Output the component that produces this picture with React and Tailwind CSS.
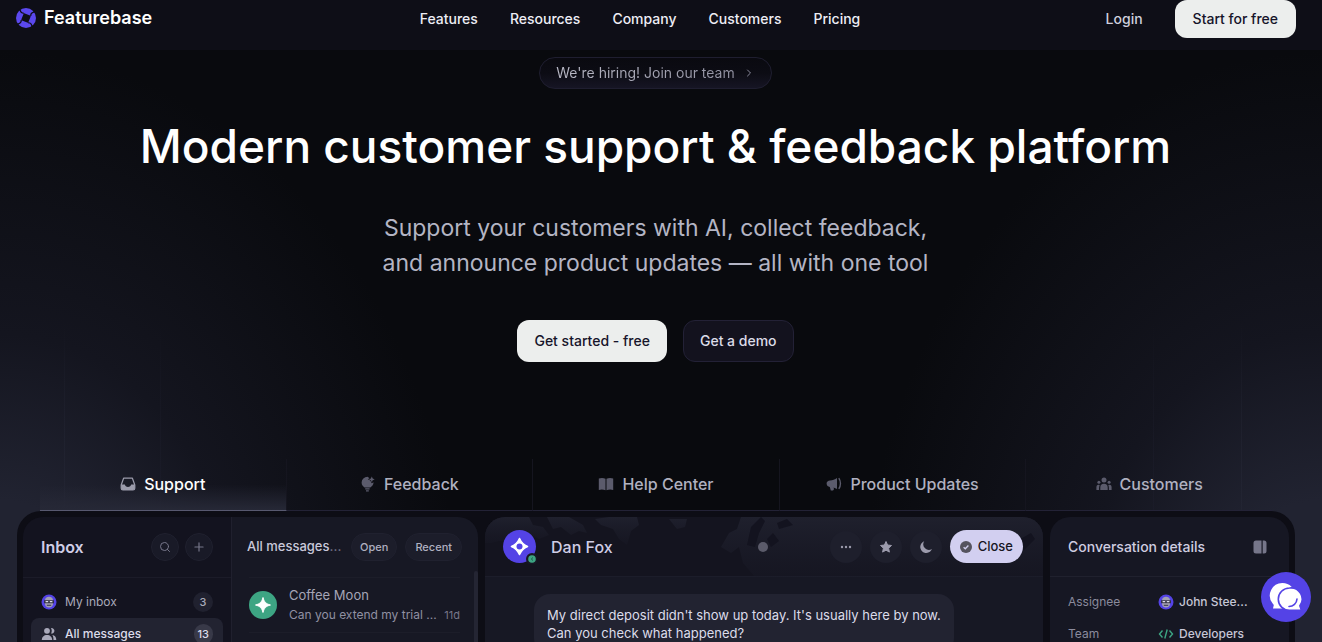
import React, { useState } from "react";
import { ChevronRight, Plus, Search } from "lucide-react";

const navLinks = ["Features", "Resources", "Company", "Customers", "Pricing"];

const tabs = [
  { name: "Support", icon: InboxIcon },
  { name: "Feedback", icon: BulbIcon },
  { name: "Help Center", icon: BookIcon },
  { name: "Product Updates", icon: MegaphoneIcon },
  { name: "Customers", icon: PeopleIcon },
];

function Logo() {
  return (
    <svg viewBox="0 0 20 20" className="size-5" aria-hidden="true">
      <circle cx="10" cy="10" r="10" fill="#5b48ee" />
      <rect x="6.200" y="6.200" width="7.600" height="7.600" rx="1" transform="rotate(22 10 10)" fill="#0e0e17" />
      {[0, 90, 180, 270].map((angle) => (
        <path
          key={angle}
          transform={`rotate(${angle} 10 10)`}
          d="M8 5.200C6.200 5.400 4.800 4.600 4.200 2.400L3 1.400"
          fill="none"
          stroke="#0e0e17"
          strokeWidth="1.200"
        />
      ))}
    </svg>
  );
}

function InboxIcon() {
  return (
    <svg viewBox="0 0 16 16" className="size-4" aria-hidden="true">
      <path d="M3.600 2.200h8.800L14.800 9v3.200a1.800 1.800 0 0 1-1.800 1.800H3a1.800 1.800 0 0 1-1.800-1.800V9z" fill="none" stroke="#9c9cac" strokeWidth="1.200" strokeLinejoin="round" />
      <path d="M1.200 8.600h3.600c.4 1.600 1.500 2.400 3.200 2.400s2.800-.8 3.200-2.400h3.600v3.600A1.800 1.800 0 0 1 13 14H3a1.800 1.800 0 0 1-1.800-1.800z" fill="#9c9cac" />
    </svg>
  );
}

function BulbIcon() {
  return (
    <svg viewBox="0 0 16 16" className="size-4" aria-hidden="true" fill="currentColor">
      <path d="M7.500.8A5.900 5.900 0 0 0 1.600 6.600c0 2.400 1.400 3.800 2.900 5h5.800c1.600-1.200 3.200-2.600 3.300-5.300l-1.900.9-1.400-2.700L7.800 3.300 9.600 2.200z" />
      <path d="M11.800.6l.9 2 2 .8-2 .9-.9 2-.9-2-2-.9 2-.8z" />
      <path d="M5.200 12.200h4.400v1.400H5.200zM6 14.200h2.800v1.200H6z" />
    </svg>
  );
}

function BookIcon() {
  return (
    <svg viewBox="0 0 16 16" className="size-4" aria-hidden="true" fill="currentColor">
      <path d="M.8 2.600C3 1.600 5.400 1.700 7.500 2.800v11.500c-2.100-1.100-4.500-1.200-6.700-.4z" />
      <path d="M15.200 2.600C13 1.600 10.600 1.700 8.500 2.800v11.500c2.100-1.100 4.500-1.200 6.700-.4z" />
    </svg>
  );
}

function MegaphoneIcon() {
  return (
    <svg viewBox="0 0 16 16" className="size-4" aria-hidden="true">
      <path d="M11 2v11l-3.400-1.400.4 1.600-1 1.200H4.800L3.800 11C2 10.800.6 9.600.6 7.600S2 4.500 4 4.400C6.600 4.300 9 3.600 11 2z" fill="currentColor" />
      <path d="M12.800 2.200c2.200 3 2.200 7.600 0 10.600" fill="none" stroke="currentColor" strokeWidth="1.400" />
    </svg>
  );
}

function PeopleIcon() {
  return (
    <svg viewBox="0 0 16 16" className="size-4" aria-hidden="true" fill="currentColor">
      <circle cx="8" cy="4" r="2.500" />
      <circle cx="2.900" cy="6.200" r="1.500" />
      <circle cx="13.100" cy="6.200" r="1.500" />
      <path d="M4.300 14v-2.600a3.700 3.700 0 0 1 7.400 0V14zM.4 14v-3A2.300 2.300 0 0 1 3.700 9c-.7 1.500-.7 3.200-.6 5zM15.600 14v-3A2.300 2.300 0 0 0 12.300 9c.7 1.500.7 3.200.6 5z" />
    </svg>
  );
}

function UsersIcon() {
  return (
    <svg viewBox="0 0 16 16" className="size-4" aria-hidden="true" fill="#a9a9ba">
      <circle cx="6" cy="4.800" r="2.900" />
      <path d="M.8 14c0-3 2.200-5 5.200-5s5.200 2 5.200 5zM10 2.200a2.700 2.700 0 1 1 0 5.200c1-1.600 1-3.600 0-5.200zM11.300 9c2.500.3 4 2.200 4 5h-2.800c0-2-.3-3.600-1.200-5z" />
    </svg>
  );
}

// small robot face used for the current teammate
function Avatar() {
  return (
    <svg viewBox="0 0 16 16" className="size-4 shrink-0" aria-hidden="true">
      <circle cx="8" cy="8" r="7.500" fill="#5443e6" />
      <path d="M4 6.500C4 4 5.600 2.800 8 2.800S12 4 12 6.500V10c0 2-1.600 3.400-4 3.400S4 12 4 10z" fill="#a3a1b4" />
      <path d="M3 6.300h10v2.900H3z" fill="#343246" />
      <path d="M4.600 7.100h2.600v1.200H4.600zM8.800 7.100h2.600v1.200H8.800z" fill="#dcdcea" />
      <path d="M5.800 10.800h4.400v1H5.800z" fill="#343246" />
    </svg>
  );
}

function Backdrop() {
  return (
    <div className="absolute inset-0 -z-10 overflow-hidden bg-[#090a0e]">
      <div className="absolute inset-0 bg-[radial-gradient(ellipse_38%_100%_at_0%_100%,#212331_22%,#14151f_48%,transparent_92%)]" />
      <div className="absolute inset-0 bg-[radial-gradient(ellipse_38%_100%_at_100%_100%,#212331_22%,#14151f_48%,transparent_92%)]" />
      {/* faint light rays */}
      <div className="absolute top-1/2 left-16 h-1/3 w-px bg-linear-to-b from-transparent to-[#232533]" />
      <div className="absolute top-1/2 left-40 h-1/3 w-px bg-linear-to-b from-transparent to-[#1b1c29]" />
      <div className="absolute top-1/2 right-20 h-1/3 w-px bg-linear-to-b from-transparent to-[#232533]" />
      <div className="absolute top-1/2 right-42 h-1/3 w-px bg-linear-to-b from-transparent to-[#1b1c29]" />
    </div>
  );
}

function Header() {
  return (
    <header className="bg-[#0e0e17] pr-[10px]">
      <div className="flex h-[50px] items-start px-4">
        <a href="#home" className="flex h-9 flex-1 items-center gap-2 text-lg font-semibold text-white">
          <Logo />
          Featurebase
        </a>
        <nav className="mr-8 flex h-[38px] items-center gap-8 text-sm font-medium text-[#ededf5]">
          {navLinks.map((link) => (
            <a key={link} href={`#${link.toLowerCase()}`}>{link}</a>
          ))}
        </nav>
        <div className="flex h-[38px] flex-1 items-center justify-end gap-8 text-sm font-medium">
          <a href="#login" className="text-[#cfcfde]">Login</a>
          <a href="#start" className="flex h-full items-center rounded-xl bg-[#eceeed] px-[18px] text-[#16142a]">Start for free</a>
        </div>
      </div>
    </header>
  );
}

function Hero() {
  return (
    <section className="flex flex-col items-center pt-[7px] text-center">
      <a href="#jobs" className="flex h-8 items-center gap-2 rounded-full border border-[#1f1e30] bg-linear-to-b from-[#0a0a10] via-[#0c0c14] to-[#161524] px-4 text-sm">
        <span className="bg-linear-to-r from-[#b9b9c6] to-[#9090a0] bg-clip-text text-transparent">We're hiring! Join our team</span>
        <ChevronRight className="size-3 text-[#8a8a9c]" />
      </a>
      <h1 className="mt-[27px] text-[46px] leading-[60px] font-medium text-white">Modern customer support &amp; feedback platform</h1>
      <p className="mt-[35px] text-[23px] leading-[35px] text-[#b4b5c4]">
        Support your customers with AI, collect feedback,
        <br />
        and announce product updates — all with one tool
      </p>
      <div className="mt-[39px] flex gap-4 text-sm font-medium">
        <button type="button" className="h-[42px] rounded-xl bg-[#eceeed] px-[17px] text-[#16142a]">Get started - free</button>
        <button type="button" className="h-[42px] rounded-xl border border-[#232136] bg-[#13121e] px-4 text-[#dcdce8]">Get a demo</button>
      </div>
    </section>
  );
}

function Tabs() {
  const [active, setActive] = useState("Support");

  return (
    <div className="mt-[97px] mr-[38px] ml-10 grid grid-cols-5">
      {tabs.map(({ name, icon: Icon }) => (
        <button
          key={name}
          type="button"
          onClick={() => setActive(name)}
          className={`flex h-[52px] items-center justify-center gap-2 border-r border-r-[#15151f] border-b pb-[2px] text-base font-medium last:border-r-transparent ${
            active === name
              ? "border-b-[#585970] bg-linear-to-b from-transparent from-50% to-[#262836] text-white"
              : "border-b-[#232236] text-[#b0b1c0]"
          }`}
        >
          <span className="text-[#5b5b6c]"><Icon /></span>
          {name}
        </button>
      ))}
    </div>
  );
}

function InboxRail() {
  return (
    <div className="w-[209px] shrink-0 border-r border-[#20202e] bg-[#13131f]">
      <div className="flex h-[61px] items-center gap-[6px] border-b border-[#1b1b28] pr-[18px] pl-[18px]">
        <h2 className="flex-1 text-base font-semibold text-[#cfcde6]">Inbox</h2>
        <button type="button" aria-label="Search" className="flex size-7 items-center justify-center rounded-full border border-[#20212f] bg-[#191a27] text-[#77778a]">
          <Search className="size-3" />
        </button>
        <button type="button" aria-label="New message" className="flex size-7 items-center justify-center rounded-full border border-[#20212f] bg-[#191a27] text-[#77778a]">
          <Plus className="size-[14px]" />
        </button>
      </div>
      <ul className="px-2 pt-2 text-xs">
        <li className="flex h-8 items-center gap-2 px-[10px] text-[#a9a9ba]">
          <Avatar />
          <span className="flex-1">My inbox</span>
          <span className="flex size-5 items-center justify-center rounded-full bg-[#20212f] text-[11px] font-medium">3</span>
        </li>
        <li className="flex h-8 items-center gap-2 rounded-lg bg-[#222331] px-[10px] font-medium text-[#dcdcea]">
          <UsersIcon />
          <span className="flex-1">All messages</span>
          <span className="flex h-5 items-center justify-center rounded-full bg-[#383948] px-1 text-[11px]">13</span>
        </li>
      </ul>
    </div>
  );
}

function MessageList() {
  return (
    <div className="relative min-w-0 flex-1 bg-[#171824]">
      <div className="flex h-[60px] items-center gap-2 pr-4 pl-[15px]">
        <h2 className="flex-1 text-[13px] font-medium whitespace-nowrap text-[#c9c9da]">
          All messages<span className="text-[#77778a]">...</span>
        </h2>
        <button type="button" className="h-7 rounded-full border border-[#20212f] bg-[#1c1d2a] px-2 text-[11px] font-medium text-[#b0b0c0]">Open</button>
        <button type="button" className="h-7 rounded-full border border-[#20212f] bg-[#1c1d2a] px-[9px] text-[11px] font-medium text-[#b0b0c0]">Recent</button>
      </div>
      <a href="#coffee-moon" className="mr-[18px] ml-[17px] flex h-14 items-center gap-3 border-y border-[#1c1d29]">
        <svg viewBox="0 0 28 28" className="size-7 shrink-0" aria-hidden="true">
          <circle cx="14" cy="14" r="14" fill="#3da583" />
          <path d="M14 6.500C15.200 11 17 12.800 21.500 14 17 15.200 15.200 17 14 21.500 12.800 17 11 15.200 6.500 14 11 12.800 12.800 11 14 6.500z" fill="#fff" stroke="#fff" strokeLinejoin="round" />
        </svg>
        <div className="min-w-0 flex-1">
          <p className="text-[13px] leading-5 text-[#a5a5b6]">Coffee Moon</p>
          <p className="flex justify-between text-xs leading-5 whitespace-nowrap text-[#9090a2]">
            <span>Can you extend my trial ...</span>
            <span className="text-[11px] text-[#77778a]">11d</span>
          </p>
        </div>
      </a>
      {/* scroll thumb */}
      <div className="absolute top-[54px] right-0 bottom-0 w-1 rounded-full bg-[#242533]" />
    </div>
  );
}

function WorldMap() {
  return (
    <svg viewBox="0 0 558 60" preserveAspectRatio="none" className="absolute inset-x-0 top-0 h-[60px] w-full" aria-hidden="true">
      <defs>
        <linearGradient id="map-fade" x1="0" y1="0" x2="0" y2="1">
          <stop offset="0" stopColor="#1f202d" />
          <stop offset="1" stopColor="#1a1b28" stopOpacity="0.300" />
        </linearGradient>
      </defs>
      <g fill="url(#map-fade)">
        <path d="M0 0h44l4 8 10 2 6 8-10 4-8-4-14 6H14L6 26H0z" />
        <path d="M62 0h22l14 8 4 8-8-2-8 4-10-8-8 2zM110 2l14-2h28l2 8-8 6-4 14-8-6-6-10-12-4zM184 2h18l-2 8-8 2z" />
        <path d="M236 30l8-14 8-4 4-12h302v60H270l-12-14-4-16-8 6z" />
      </g>
      <path d="M262 28l4-18 10-10 4 4-6 12-4 14zM292 6l10-4 6 6-14 4zM282 22l6-6 6 8-8 6zM532 24l14-8 4 6-12 12-8 2z" fill="#13131f" />
    </svg>
  );
}

function Conversation() {
  return (
    <div className="relative min-w-0 overflow-hidden rounded-[20px] bg-[#171824]">
      <div className="relative flex h-[60px] items-center border-b border-[#1c1d2a] bg-[#14141f] pr-5 pl-[18px]">
        <WorldMap />
        <div className="relative flex flex-1 items-center gap-[14px]">
          <svg viewBox="0 0 34 34" className="size-[34px]" aria-hidden="true">
            <circle cx="16.500" cy="16.500" r="16.500" fill="#5443e6" />
            <path d="M16.500 8.500q2.400 5.600 8 8-5.600 2.400-8 8-2.400-5.600-8-8 5.600-2.400 8-8z" fill="#fff" stroke="#fff" strokeWidth="1.600" strokeLinejoin="round" />
            <circle cx="16.500" cy="16.500" r="3" fill="#5443e6" />
            <circle cx="29" cy="29" r="6" fill="#171824" />
            <circle cx="29" cy="29" r="3.800" fill="#3da583" />
            <path d="M30 27.500L28.300 29l1.700 1.500" stroke="#1d5a4b" fill="none" />
          </svg>
          <h2 className="flex-1 text-base font-medium text-[#cfcde6]">Dan Fox</h2>
          <span className="mr-[62px] size-[10px] rounded-full bg-[#5b5b6a]" />
        </div>
        <div className="relative flex items-center gap-2 text-[#9c9bac]">
          <button type="button" aria-label="More" className="flex size-8 items-center justify-center rounded-full bg-[#1e1f2c]">
            <svg viewBox="0 0 14 14" className="size-[14px]" fill="currentColor"><circle cx="3" cy="7" r="1.200" /><circle cx="7" cy="7" r="1.200" /><circle cx="11" cy="7" r="1.200" /></svg>
          </button>
          <button type="button" aria-label="Star" className="flex size-8 items-center justify-center rounded-full bg-[#1e1f2c]">
            <svg viewBox="0 0 14 14" className="size-[14px]" fill="currentColor" stroke="currentColor" strokeLinejoin="round"><path d="M7 1.500l1.600 3.500 3.900.5-2.900 2.700.8 3.900L7 10.200l-3.400 1.900.8-3.900L1.500 5.500 5.400 5z" /></svg>
          </button>
          <button type="button" aria-label="Snooze" className="flex size-8 items-center justify-center rounded-full bg-[#1e1f2c]">
            <svg viewBox="0 0 14 14" className="size-[14px]" fill="currentColor"><path d="M5.200 1.300A6 6 0 1 0 12.900 9 5.600 5.600 0 0 1 5.200 1.300z" /></svg>
          </button>
          <button type="button" className="flex h-[33px] items-center gap-[6px] rounded-full bg-[#d2cff0] px-[10px] text-[13px] font-medium text-[#17161f]">
            <svg viewBox="0 0 12 12" className="size-3"><circle cx="6" cy="6" r="6" fill="#55535f" /><path d="M3.600 6.200l1.700 1.600 3.100-3.300" fill="none" stroke="#d2cff0" strokeWidth="1.300" /></svg>
            Close
          </button>
        </div>
      </div>
      <p className="mx-[49px] mt-[17px] w-fit rounded-2xl bg-[#222331] px-[13px] py-3 text-[13px] leading-[18px] text-[#dcdcea]">
        My direct deposit didn't show up today. It's usually here by now.
        <br />
        Can you check what happened?
      </p>
    </div>
  );
}

function Details() {
  return (
    <div className="rounded-[20px] bg-[#161723] text-xs">
      <div className="flex h-[60px] items-center justify-between border-b border-[#20212e] pr-[22px] pl-[18px]">
        <h2 className="text-sm font-medium text-[#cfcde0]">Conversation details</h2>
        <svg viewBox="0 0 14 14" className="size-[14px]" fill="#76768a" aria-hidden="true">
          <path d="M3 .5h5.500v13H3A2.500 2.500 0 0 1 .5 11V3A2.500 2.500 0 0 1 3 .5zM9.700.5h1.300A2.500 2.500 0 0 1 13.500 3v8a2.500 2.500 0 0 1-2.500 2.500H9.700z" />
        </svg>
      </div>
      <dl className="grid grid-cols-[90px_1fr] px-[18px] pt-[9px] leading-8 text-[#8b8b9d]">
        <dt>Assignee</dt>
        <dd className="flex items-center gap-[5px] font-medium text-[#c6c6d6]"><Avatar />John Stee...</dd>
        <dt>Team</dt>
        <dd className="flex items-center gap-[5px] font-medium text-[#c6c6d6]">
          <svg viewBox="0 0 16 16" className="size-4" fill="none" stroke="#3da583" strokeWidth="1.400" aria-hidden="true">
            <path d="M4.500 4.500L1.500 8l3 3.500M11.500 4.500l3 3.500-3 3.500M9.200 3.500l-2.400 9" />
          </svg>
          Developers
        </dd>
      </dl>
    </div>
  );
}

function ChatLauncher() {
  return (
    <button type="button" aria-label="Open chat" className="fixed right-[11px] bottom-5 flex size-[50px] items-center justify-center rounded-full bg-[#5443e6]">
      <svg viewBox="0 0 34 34" className="size-[34px]" aria-hidden="true">
        <path d="M13.500 3a12.500 12.500 0 0 0-10 20.200L4.800 25 4 28.500h9.500a12.700 12.700 0 0 0 0-25.500z" fill="#fff" />
        <path d="M20.500 8a11.200 11.200 0 1 0 0 22.400H32.500l-1.600-4.600A11.200 11.200 0 0 0 20.500 8z" fill="#fff" stroke="#5443e6" strokeWidth="1.600" />
        <path d="M20 26.500a8 8 0 0 0 8-7.500" fill="none" stroke="#5443e6" strokeWidth="1.600" strokeLinecap="round" />
      </svg>
    </button>
  );
}

export default function App() {
  return (
    <div className="relative isolate h-screen overflow-hidden font-['Inter',sans-serif]">
      <Backdrop />
      <Header />
      <main className="pr-[11px]">
        <Hero />
        <Tabs />
        <div className="mr-4 ml-[17px] grid h-[480px] grid-cols-[455px_minmax(0,1fr)_239px] gap-[7px] rounded-3xl bg-[#0d0d15] px-[6px] pt-[6px]">
          <div className="flex overflow-hidden rounded-[20px]">
            <InboxRail />
            <MessageList />
          </div>
          <Conversation />
          <Details />
        </div>
      </main>
      <ChatLauncher />
    </div>
  );
}
